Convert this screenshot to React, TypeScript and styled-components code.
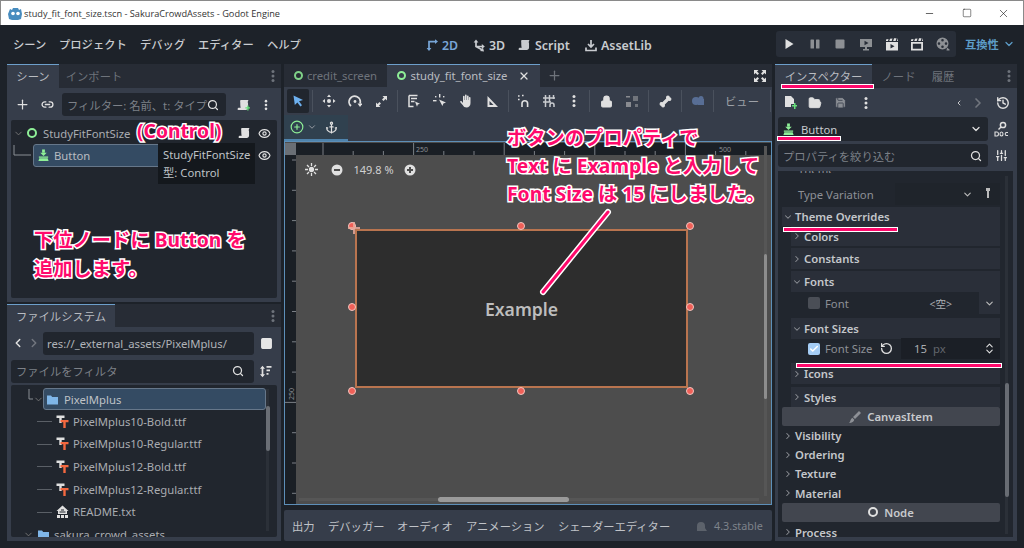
import React from "react";
import styled, { createGlobalStyle } from "styled-components";
import { Plus, Link2, Search, ChevronDown, ChevronRight, ChevronLeft, Eye, X, Minus, Square, Anchor, Lock, Bone, Check, FolderOpen, Save, History, SlidersVertical, RotateCcw, ChevronsUpDown, CirclePlus } from "lucide-react";

const FONT = `"Noto Sans", "Noto Sans CJK JP", sans-serif`;

const Global = createGlobalStyle`
  html, body { margin: 0; padding: 0; background: #1c2028; }
  body { font-family: ${FONT}; width: 1024px; height: 548px; overflow: hidden; }
  * { box-sizing: border-box; }
`;

const Page = styled.div`
  position: relative; width: 1024px; height: 548px; background: #1d2229; overflow: hidden;
  color: #c6c9cd; font-size: 11.3px;
`;

const TitleBar = styled.div`
  height: 25px; background: #fff; border-top: 1px solid #8a8a8a; border-left: 1px solid #8a8a8a; border-right: 1px solid #8a8a8a;
  display: flex; align-items: center; padding: 0 0 0 7px; color: #333; font-size: 9.2px; font-family: "Open Sans", "Noto Sans", sans-serif;
`;
const TitleText = styled.span`margin-left: 1px; flex: 1; white-space: nowrap;`;
const WinBtn = styled.div`width: 37px; display: flex; justify-content: center; color: #111; &:last-child{margin-right: 1px;}`;

const MenuBar = styled.div`height: 39px; display: flex; align-items: center; position: relative; padding: 0 0 2px 13px;`;
const MenuItem = styled.span<{ $w: number }>`width: ${p => p.$w}px; font-size: 11.3px; color: #c9ccd0; white-space: nowrap; font-weight: 500;`;
const MainTabs = styled.div`position: absolute; left: 426px; top: 10px; display: flex; align-items: center; height: 20px;`;
const MainTab = styled.span<{ $active?: boolean; $w: number }>`
  width: ${p => p.$w}px; display: inline-flex; align-items: center; gap: 4px; font-size: 12.4px; font-weight: 600; flex: none;
  color: ${p => (p.$active ? "#78a6d8" : "#c9ccd0")};
`;
const PlayGroup = styled.div`
  position: absolute; left: 776px; top: 6px; width: 180px; height: 26px; background: #282e38; border-radius: 3px;
  display: flex; align-items: center;
`;
const PlayCell = styled.div<{ $dim?: boolean }>`width: 25.8px; display: flex; justify-content: center; opacity: ${p => (p.$dim ? 0.55 : 1)}; color: #e0e0e0;`;
const Compat = styled.div`position: absolute; left: 965px; top: 11px; display: flex; align-items: center; gap: 4px; color: #5d9dc8; font-size: 11.3px; font-weight: 600;`;

const Docks = styled.div`display: flex; height: 477px; padding-left: 7px; gap: 3px;`;
const Column = styled.div<{ $w: number }>`width: ${p => p.$w}px; display: flex; flex-direction: column;`;

const TabStrip = styled.div<{ $h?: number; $gapTop?: boolean }>`
  height: ${p => p.$h ?? 24}px; display: flex; align-items: stretch; background: #272c35; flex: none;
  border-top: ${p => (p.$gapTop ? "2px solid #1d2229" : "none")};
`;
const DockTab = styled.div<{ $active?: boolean; $w: number }>`
  width: ${p => p.$w}px; display: flex; align-items: center; justify-content: center; flex: none; white-space: nowrap; gap: 4px; padding-bottom: 1px;
  background: ${p => (p.$active ? "#363d4a" : "transparent")};
  border-top: ${p => (p.$active ? "1px solid #6d9fcb" : "1px solid transparent")};
  color: ${p => (p.$active ? "#b9bcc1" : "#6e737b")};
`;
const StripSpacer = styled.div`flex: 1;`;
const StripDots = styled.div`width: 16px; display: flex; align-items: center; justify-content: center; color: #6e737b;`;

const Panel = styled.div<{ $h: number; $pl?: number; $pt?: number }>`
  height: ${p => p.$h}px; background: #363d4a; padding: ${p => p.$pt ?? 0}px 4px 4px ${p => p.$pl ?? 4}px; display: flex; flex-direction: column; flex: none;
`;
const ToolRow = styled.div<{ $h: number; $mt?: number }>`height: ${p => p.$h}px; margin-top: ${p => p.$mt ?? 0}px; display: flex; align-items: center; flex: none;`;
const IconCell = styled.div<{ $w: number; $o?: number; $bg?: string; $c?: string }>`
  width: ${p => p.$w}px; display: flex; align-items: center; justify-content: center; flex: none;
  color: ${p => p.$c ?? "#e0e0e0"}; opacity: ${p => p.$o ?? 1};
  background: ${p => p.$bg ?? "transparent"}; align-self: ${p => (p.$bg ? "stretch" : "auto")};
`;
const Field = styled.div<{ $w: number; $muted?: boolean; $h?: number; $pl?: number; $pr?: number }>`
  width: ${p => p.$w}px; height: ${p => p.$h ?? 23}px; background: #21262e; border-radius: 3px; display: flex; align-items: center; padding: 0 ${p => p.$pr ?? 6}px 0 ${p => p.$pl ?? 5}px; flex: none;
  white-space: nowrap; color: ${p => (p.$muted ? "#7d8188" : "#b0b3b8")}; justify-content: space-between; overflow: hidden;
`;
const Tree = styled.div<{ $mt?: number }>`flex: 1; margin-top: ${p => p.$mt ?? 0}px; background: #21262e; border-radius: 2px; overflow: hidden; position: relative; min-height: 0;`;

const SceneTop = styled.div`padding: 2px 0 0 2px; display: flex; flex-direction: column;`;
const SceneLine = styled.div`height: 22px; display: flex; align-items: center; white-space: nowrap; color: #a9acb1;`;
const SceneSel = styled.div`
  width: 222px; height: 23px; flex: none; display: flex; align-items: center; gap: 4px; padding-left: 3px; margin-left: 2px;
  border-radius: 3px; background: #344b63; border: 1px solid #66778a; color: #b9bcc1;
`;
const NameGap = styled.span<{ $ml: number }>`margin-left: ${p => p.$ml}px;`;
const RowEnd = styled.div`margin-left: auto; display: flex; align-items: center; gap: 7px; padding-right: 6px; color: #e0e0e0;`;
const Ring = styled.span<{ $size: number; $color: string; $b?: number }>`
  width: ${p => p.$size}px; height: ${p => p.$size}px; border: ${p => p.$b ?? 2}px solid ${p => p.$color}; border-radius: 50%; display: inline-block; flex: none;
`;
const Tooltip = styled.div`
  position: absolute; left: 158px; top: 143px; width: 97px; height: 41px; background: #14181d; color: #bfc2c6; font-size: 11.3px; line-height: 17.5px;
  padding: 3px 0 0 5px; white-space: nowrap; z-index: 4;
`;

const FileList = styled.div`display: flex; flex-direction: column; padding-top: 3px;`;
const FileRow = styled.div<{ $ml: number }>`
  height: 22.6px; flex: none; display: flex; align-items: center; gap: 4px; margin-left: ${p => p.$ml}px; color: #a9acb1; white-space: nowrap;
`;
const FolderHead = styled.div`height: 22px; flex: none; display: flex; align-items: center; margin-left: 17px; white-space: nowrap;`;
const FolderSel = styled.div`
  width: 223px; height: 22px; flex: none; display: flex; align-items: center; gap: 5px; padding-left: 2px; margin-left: -1px;
  border-radius: 3px; background: #344b63; border: 1px solid #66778a; color: #bfc2c6;
`;
const SakuraRow = styled(FileRow)`gap: 3px;`;
const TreeBar = styled.div`position: absolute; right: 8px; top: 4px; bottom: 6px; width: 3px; background: #2b3038;`;
const TreeThumb = styled.div`position: absolute; left: 0; top: 17px; width: 4px; height: 45px; background: #6a6e75; border-radius: 2px;`;

const Toolbar = styled.div`height: 28px; background: #363d4a; display: flex; align-items: center; padding-left: 3px; flex: none;`;
const ToolBtn = styled.div<{ $w?: number; $active?: boolean; $o?: number; $c?: string }>`
  width: ${p => p.$w ?? 26}px; height: 24px; display: flex; align-items: center; justify-content: center; flex: none; color: ${p => p.$c ?? "#e0e0e0"};
  background: ${p => (p.$active ? "#21262e" : "transparent")}; border-radius: 2px; opacity: ${p => p.$o ?? 1};
`;
const ToolSep = styled.div`width: 1px; height: 22px; background: #4a515d; margin: 0 3px; flex: none;`;
const SubRow = styled.div`height: 26px; background: #363d4a; flex: none;`;
const SubBox = styled.div`width: 64px; height: 26px; background: #30414f; border-bottom: 2px solid #4f84ad; display: flex; align-items: center; padding-left: 6px; gap: 3px; color: #e0e0e0;`;
const AnchorSlot = styled.span`margin-left: 5px; display: flex;`;
const Viewport = styled.div`height: 364px; border: 1px solid #5d8fb8; position: relative; background: #4d4d4d; overflow: hidden; flex: none;`;
const Rulers = styled.svg`display: block; position: absolute; left: 0; top: 0;`;
const Overlay = styled.div`position: absolute; left: 20px; top: 20px; display: flex; align-items: center; color: #e0e0e0;`;
const OverlayGap = styled.span`width: 13px;`;
const ZoomLabel = styled.span`width: 61px; text-align: center; color: #d0d0d0; font-size: 11px;`;
const ControlRect = styled.div`
  position: absolute; left: 70px; top: 87px; width: 333px; height: 159px; background: #2d2d2d; border: 2px solid #b9744f;
  display: flex; align-items: center; justify-content: center; color: #bdbdbd; font-weight: 600; font-size: 17.6px;
`;
const Handle = styled.i<{ $x: number; $y: number }>`
  position: absolute; left: ${p => p.$x - 4}px; top: ${p => p.$y - 4}px; width: 8px; height: 8px; border-radius: 50%; background: #f06058; border: 1px solid #f2c6c0;
`;
const Pivot = styled.svg`position: absolute; left: 63px; top: 80px;`;
const VBar = styled.div`position: absolute; right: 4px; top: 4px; bottom: 8px; width: 3px; background: #565656;`;
const VThumb = styled.div`position: absolute; top: 108px; left: 0; width: 3px; height: 145px; background: #8d8d8d; border-radius: 2px;`;
const HBar = styled.div`position: absolute; left: 14px; right: 12px; bottom: 3px; height: 3px; background: #565656;`;
const HThumb = styled.div`position: absolute; left: 139px; top: -1px; width: 131px; height: 5px; background: #9a9a9a; border-radius: 3px;`;
const BottomPanel = styled.div`height: 31px; margin-top: 5px; background: #363d4a; display: flex; align-items: center; padding-left: 8px; border-radius: 2px; flex: none; color: #c0c3c8;`;
const BottomItem = styled.span<{ $w: number }>`width: ${p => p.$w}px; white-space: nowrap; flex: none;`;
const Version = styled.div`display: flex; align-items: center; gap: 7px; color: #7e838b; font-size: 10.8px; white-space: nowrap;`;

const InspectorList = styled.div`flex: 1; background: #21262e; margin-top: 4px; overflow: hidden; position: relative; padding: 0 0 0 4px; min-height: 0;`;
const Clip = styled.div`display: flex; flex-direction: column; width: 218px;`;
const Row = styled.div<{ $h: number; $indent?: number; $group?: boolean; $bold?: boolean; $mt?: number; $pl?: number }>`
  height: ${p => p.$h}px; flex: none; display: flex; align-items: center; white-space: nowrap;
  margin-left: ${p => p.$indent ?? 0}px; margin-top: ${p => p.$mt ?? 0}px; padding-left: ${p => p.$pl ?? 1}px;
  background: ${p => (p.$group ? "#2a2f39" : "transparent")};
  font-weight: ${p => (p.$bold ? 600 : 400)}; color: ${p => (p.$bold ? "#c4c7cb" : "#8d9096")};
  gap: 2px;
`;
const ClippedRow = styled.div`height: 2px; overflow: hidden; display: flex; align-items: flex-end; padding-left: 16px; line-height: 6px; color: #8d9096; flex: none;`;
const Category = styled.div`height: 19px; flex: none; background: #42464f; border-radius: 2px; display: flex; align-items: center; justify-content: center; gap: 6px; color: #c8cacd; font-weight: 600;`;
const CheckBox = styled.span<{ $on?: boolean }>`
  width: 12px; height: 12px; border-radius: 2px; background: ${p => (p.$on ? "#a5cdf5" : "#4a4e56")}; display: inline-flex; align-items: center; justify-content: center; margin-right: 3px; color: #fff; flex: none;
`;
const ValueBox = styled.div<{ $w: number; $h?: number; $bg?: string; $end?: boolean }>`
  margin-left: auto; width: ${p => p.$w}px; height: ${p => p.$h ?? 21}px; background: ${p => p.$bg ?? "#1b1f26"}; display: flex; align-items: center; color: #8d9096; flex: none;
  justify-content: ${p => (p.$end ? "flex-end" : "flex-start")};
`;
const ResetSlot = styled.span`margin-left: 5px; display: flex; color: #e0e0e0;`;
const VariationTail = styled.div`display: flex; align-items: center; gap: 12px; padding-right: 9px;`;
const EmptyLabel = styled.span`margin-right: 27px; color: #a9acb1; font-size: 10.5px;`;
const Number15 = styled.span`margin-left: 13px; color: #a9acb1;`;
const PxUnit = styled.span`margin-left: 6px; color: #62666d;`;
const Spinner = styled.span`margin-left: auto; margin-right: 4px; display: flex; color: #e0e0e0;`;
const InspBar = styled.div`position: absolute; left: 227px; top: 5px; bottom: 3px; width: 3px; background: #2b3038;`;
const InspThumb = styled.div`position: absolute; left: 0; top: 207px; width: 4px; height: 114px; background: #686c73; border-radius: 2px;`;
const SelectName = styled.span`margin-left: 6px; color: #c6c9cd; margin-right: auto;`;

const Note = styled.div<{ $x: number; $y: number }>`
  position: absolute; left: ${p => p.$x}px; top: ${p => p.$y}px; z-index: 6; white-space: nowrap;
  font-family: "Noto Sans", "Noto Sans CJK JP", sans-serif;
  font-weight: 700; font-size: 19.3px; line-height: 26px; color: #ff0a6c;
  -webkit-text-stroke: 3px #fff; paint-order: stroke fill;
`;
const Mark = styled.div<{ $x: number; $y: number; $w: number }>`
  position: absolute; left: ${p => p.$x}px; top: ${p => p.$y}px; width: ${p => p.$w}px; height: 5px; background: #ff0a6c; border: 1px solid #fff; z-index: 6;
`;
const Callout = styled.svg`position: absolute; left: 530px; top: 200px; z-index: 6;`;

const NodeIcon = ({ s = 14 }: { s?: number }) => (
  <svg width={s} height={s} viewBox="0 0 14 14" fill="#8eef97" style={{ flex: "none" }}>
    <rect x="5.5" y="0.5" width="3" height="3.5" />
    <path d="M3.5 4h7L7 7.5z" />
    <rect x="2" y="8" width="10" height="1.5" opacity=".9" />
    <path d="M2.5 10h9l1 3h-11z" />
  </svg>
);
const FontIcon = () => (
  <svg width="13" height="13" viewBox="0 0 13 13" style={{ flex: "none" }}>
    <path d="M0.5 0.5h8v2.4h-2.8v5.2H3.3V2.9H0.5z" fill="#e0e0e0" />
    <path d="M4.5 5h8v2.2h-2.8V13H7.3V7.2H4.5z" fill="#f4683f" />
  </svg>
);
const TxtIcon = () => (
  <svg width="13" height="13" viewBox="0 0 13 13" fill="#e0e0e0" style={{ flex: "none" }}>
    <path d="M6.5 0.5L12.5 6H11v3H2V6H.5z" />
    <rect x="5" y="4.5" width="3" height="1" fill="#21262e" /><rect x="3.5" y="6.5" width="6" height="1" fill="#21262e" />
    <rect x="1" y="10" width="3" height="3" /><rect x="5" y="10" width="3" height="3" /><rect x="9" y="10" width="3" height="3" />
  </svg>
);
const ScriptIcon = ({ add, c = "#e0e0e0" }: { add?: boolean; c?: string }) => (
  <svg width="13" height="14" viewBox="0 0 14 14" style={{ flex: "none" }}>
    <path d="M4 1.5h8.5c-1 1-1 2.5-.6 4v4.5c0 1-1 2.5-2.5 2.5H1.5c-1 0-1.4-1.8 0-2.5H4c-.5-2-.5-4-.5-5.5S3 2.2 4 1.5z" fill={c} />
    {add && <path d="M9 9.5h2v-2h1.4v2h1.6v1.4h-1.6v2H11v-2H9z" fill="#66e07a" />}
  </svg>
);
const Dots = () => (
  <svg width="14" height="14" viewBox="0 0 14 14" fill="currentColor">
    <circle cx="7" cy="2.5" r="1.5" /><circle cx="7" cy="7" r="1.5" /><circle cx="7" cy="11.5" r="1.5" />
  </svg>
);
const FolderFill = () => (
  <svg width="13" height="13" viewBox="0 0 13 13" fill="#7fb6e8" style={{ flex: "none" }}>
    <path d="M1 2.5h4l1.2 1.5H12v7.5H1z" />
  </svg>
);
const SortIcon = () => (
  <svg width="13" height="13" viewBox="0 0 13 13" fill="none" stroke="#e0e0e0" strokeWidth="1.7">
    <path d="M3.500 2v9" /><path d="M1 3.700L3.500.8 6 3.700zM1 9.300l2.500 2.900L6 9.300z" fill="#e0e0e0" stroke="none" />
    <path d="M7.500 1.800H12.500M7.500 5.300H11M7.500 8.800H9.500" />
  </svg>
);
const GuideL = ({ w, h = 20 }: { w: number; h?: number }) => (
  <svg width={w} height={h} style={{ flex: "none" }}><path d={`M1 0V${h / 2}H${w}`} stroke="#8a8e94" fill="none" /></svg>
);
const GuideT = () => (
  <svg width="15" height="22" style={{ flex: "none" }}><path d="M0 11.5H15" stroke="#5a5f66" fill="none" /></svg>
);
const MoveIcon = () => (
  <svg width="14" height="14" viewBox="0 0 14 14" fill="#e0e0e0">
    <circle cx="7" cy="7" r="2" /><path d="M7 .5l2 2.5H5zM7 13.5L5 11h4zM.5 7L3 5v4zM13.5 7L11 9V5z" />
  </svg>
);
const RotateIcon = () => (
  <svg width="14" height="14" viewBox="0 0 14 14" fill="none" stroke="#e0e0e0" strokeWidth="1.8">
    <path d="M3 12A5.6 5.6 0 1 1 12 9.5" /><circle cx="7" cy="7.5" r="1.4" fill="#e0e0e0" stroke="none" /><path d="M9.5 9.5h5L12 13z" fill="#e0e0e0" stroke="none" />
  </svg>
);
const ScaleIcon = () => (
  <svg width="13" height="13" viewBox="0 0 13 13" fill="#e0e0e0">
    <path d="M7.5 1H12v4.5L10.5 4 8.5 6 7 4.5 9 2.5zM5.5 12H1V7.5L2.5 9l2-2L6 8.5l-2 2z" />
  </svg>
);
const ListSelectIcon = () => (
  <svg width="14" height="14" viewBox="0 0 14 14" fill="none" stroke="#e0e0e0" strokeWidth="1.5">
    <path d="M2 1.5h8.5M2 1.5v11h4.5M4 4.5h6M4 7.5h3.5" /><path d="M8 7.5l5 2.2-2.2.7-.8 2.3z" fill="#e0e0e0" stroke="none" />
  </svg>
);
const PivotIcon = () => (
  <svg width="14" height="14" viewBox="0 0 14 14" fill="#e0e0e0">
    <rect x="0" y="6" width="3.5" height="1.4" /><rect x="6" y="0" width="1.4" height="3.5" /><rect x="2" y="2" width="1.4" height="1.4" /><rect x="10" y="2" width="1.4" height="1.4" />
    <path d="M6 5.5l7 3-2.6.9-1 2.6z" />
  </svg>
);
const HandIcon = () => (
  <svg width="14" height="14" viewBox="0 0 14 14" fill="#e0e0e0">
    <path d="M4 6V2.5a.8.8 0 011.6 0V6h.4V1.3a.8.8 0 011.6 0V6h.4V2.2a.8.8 0 011.6 0V6h.3V3.8a.8.8 0 011.6 0V9c0 2.8-1.6 4.5-4 4.5-1.8 0-2.8-.8-3.6-2.2L1.3 8.2c-.5-.9.7-1.6 1.3-.9L4 9z" />
  </svg>
);
const RulerIcon = () => (
  <svg width="13" height="13" viewBox="0 0 13 13" fill="#e0e0e0" fillRule="evenodd"><path d="M1.5 1v11h10.5zM3.5 6v4h4z" /></svg>
);
const SmartSnap = () => (
  <svg width="14" height="14" viewBox="0 0 14 14" fill="none" stroke="#e0e0e0" strokeWidth="1.6">
    <path d="M5 13V9.5a2.8 2.8 0 015.6 0V13" /><path d="M1 2h1.6M5 1.5h1.6M1 5.5h1.6" />
  </svg>
);
const GridSnap = () => (
  <svg width="14" height="14" viewBox="0 0 14 14" fill="none" stroke="#c9ccd0" strokeWidth="1.5">
    <path d="M3.5 1v12M7.5 1v7M11.5 1v4M1 4h12M1 8h8" /><path d="M8 13v-2a2 2 0 014 0v2" />
  </svg>
);
const GroupIcon = () => (
  <svg width="13" height="13" viewBox="0 0 13 13" fill="#c0c0c0">
    <rect x="0" y="7" width="5" height="5" /><rect x="7" y="1" width="5" height="5" opacity=".7" /><rect x="0" y="1" width="4" height="1.5" /><rect x="9" y="9" width="3" height="3" opacity=".7" />
  </svg>
);
const CameraIcon = () => (
  <svg width="14" height="12" viewBox="0 0 14 12" fill="#7aa0e0">
    <circle cx="5" cy="6" r="4" /><circle cx="10" cy="3.5" r="2.5" /><rect x="7" y="4" width="6" height="6" />
  </svg>
);
const Icon2D = () => (
  <svg width="12" height="13" viewBox="0 0 12 13" fill="none" stroke="#78a6d8" strokeWidth="1.7">
    <path d="M3 11V2.6h6.5" /><path d="M.6 9l2.4 3 2.4-3" fill="#78a6d8" stroke="none" /><path d="M9 .3l3 2.3-3 2.3z" fill="#78a6d8" stroke="none" />
  </svg>
);
const Icon3D = () => (
  <svg width="12" height="13" viewBox="0 0 12 13" fill="none" stroke="#c9ccd0" strokeWidth="1.7">
    <path d="M3 3v4.5l6 3.2M3 7.5h6.5" /><path d="M.6 3.4L3 .5l2.4 2.9z" fill="#c9ccd0" stroke="none" /><path d="M7 12l4 .5-1-3.8z" fill="#c9ccd0" stroke="none" /><path d="M8.8 5l3 2.5-3 2.5z" fill="#c9ccd0" stroke="none" />
  </svg>
);
const AssetIcon = () => (
  <svg width="12" height="13" viewBox="0 0 12 13" fill="none" stroke="#c9ccd0" strokeWidth="1.7">
    <path d="M6 1v6.5M3 5l3 3 3-3M1 8.5v3h10v-3" />
  </svg>
);
const ExpandIcon = () => (
  <svg width="12" height="12" viewBox="0 0 12 12" fill="#e0e0e0">
    <path d="M0 0h4.5L3 1.5 5 3.5 3.5 5 1.5 3 0 4.5zM12 0v4.5L10.5 3 8.500 5 7 3.500 9 1.500 7.500 0zM0 12V7.500L1.500 9 3.500 7 5 8.500 3 10.500 4.500 12zM12 12H7.500L9 10.500 7 8.500 8.500 7 10.500 9 12 7.500z" />
  </svg>
);
const GameMonitor = () => (
  <svg width="14" height="13" viewBox="0 0 14 13" fill="#e0e0e0">
    <path d="M1 1h12v8H8v2h2v1.500H4V11h2V9H1z" /><path d="M5.500 2.800v4.400L9.500 5z" fill="#282e38" />
  </svg>
);
const ClapFilled = () => (
  <svg width="14" height="13" viewBox="0 0 14 13" fill="#e0e0e0">
    <path d="M1 1.500l2.500-.5-.5 2H1zM5 .8l2.500-.3-.8 2.500H4.300zM9 .3h2.500l-.8 2.700H8.200zM13 0v3h-1z" />
    <path d="M1 4h12v8.500H1z" /><path d="M5.500 6v4.500L9.500 8.200z" fill="#282e38" />
  </svg>
);
const ClapOutline = () => (
  <svg width="14" height="13" viewBox="0 0 14 13" fill="#e0e0e0">
    <path d="M1 1.500l2.500-.5-.5 2H1zM5 .8l2.500-.3-.8 2.500H4.300zM9 .3h2.500l-.8 2.700H8.200zM13 0v3h-1z" />
    <path fillRule="evenodd" d="M1 4h12v8.500H1zM2.800 5.800v5h8.400v-5z" />
  </svg>
);
const Reel = () => (
  <svg width="14" height="14" viewBox="0 0 14 14" fill="#e0e0e0" fillRule="evenodd">
    <path d="M6.500.5a6 6 0 100 12 6 6 0 000-12zM6.500 2a1.300 1.300 0 110 2.600 1.300 1.300 0 010-2.600zM3 5.300a1.300 1.300 0 110 2.600 1.300 1.300 0 010-2.600zM10 5.300a1.300 1.300 0 110 2.600 1.300 1.300 0 010-2.600zM6.500 8.500a1.300 1.300 0 110 2.600 1.300 1.300 0 010-2.600z" />
    <path d="M11 10.500l2.500 2v1h-3z" />
  </svg>
);
const NewDoc = () => (
  <svg width="13" height="14" viewBox="0 0 13 14" fill="#e0e0e0">
    <path d="M1 0h6l3 3v5H7v3H1z" /><path d="M8 9h2V7h1.500v2H13v1.500h-1.500V13H10v-2.500H8z" fill="#66e07a" />
  </svg>
);
const DocSearch = () => (
  <svg width="15" height="16" viewBox="0 0 15 16" fill="none" stroke="#e0e0e0" strokeWidth="1.500">
    <circle cx="9" cy="4" r="2.600" /><path d="M7 6L4.500 8.500" />
    <path d="M1 11h2q1.500 0 1.500 2T3 15H1zM7.500 11a1.500 2 0 100 4 1.500 2 0 000-4zM14 11.500h-1.500q-1.300 0-1.300 1.500t1.300 1.500H14" strokeWidth="1.100" />
  </svg>
);
const BrushIcon = () => (
  <svg width="12" height="12" viewBox="0 0 12 12" fill="#8d9096"><path d="M10 0l2 2-6 6-2-2zM3.300 6.700l2 2C5 10.500 3 12 0 12c1.500-1 1-3.500 3.300-5.300z" /></svg>
);
const PinIcon = () => (
  <svg width="6" height="12" viewBox="0 0 6 12" fill="#bbb"><rect x="1" y="0" width="4" height="3" /><rect x="2" y="3" width="2" height="7" /></svg>
);
const Bell = () => (
  <svg width="12" height="12" viewBox="0 0 12 12" fill="#5c626b"><path d="M2 11V6a4 4 0 018 0v2l2 3z" /></svg>
);
const ZoomOut = () => (
  <svg width="12" height="12" viewBox="0 0 12 12"><circle cx="6" cy="6" r="5.500" fill="#e0e0e0" /><rect x="3" y="5" width="6" height="2" fill="#4d4d4d" /></svg>
);
const ZoomIn = () => (
  <svg width="12" height="12" viewBox="0 0 12 12"><circle cx="6" cy="6" r="5.500" fill="#e0e0e0" /><path d="M3 5h2V3h2v2h2v2H7v2H5V7H3z" fill="#4d4d4d" /></svg>
);
const PanIcon = () => (
  <svg width="13" height="13" viewBox="0 0 13 13" fill="none" stroke="#e0e0e0" strokeWidth="1.300"><circle cx="6.500" cy="6.500" r="2" fill="#e0e0e0" /><path d="M6.500 0v3M6.500 10v3M0 6.500h3M10 6.500h3M2 2l2 2M11 2L9 4M2 11l2-2M11 11L9 9" /></svg>
);
const GodotLogo = () => (
  <svg width="15" height="15" viewBox="0 0 15 15" style={{ flex: "none" }}>
    <path d="M2 3l2 1 1-2h5l1 2 2-1 1 5-1 5-3 1H4l-3-1-1-5z" fill="#478cbf" /><circle cx="5" cy="7.500" r="1.800" fill="#fff" /><circle cx="10" cy="7.500" r="1.800" fill="#fff" />
  </svg>
);
const Play = () => <svg width="12" height="12" viewBox="0 0 12 12" fill="#e0e0e0"><path d="M2.500 1l8 5-8 5z" /></svg>;
const Pause = () => <svg width="12" height="12" viewBox="0 0 12 12" fill="#e0e0e0"><rect x="1.500" y="1.500" width="3.500" height="9" rx=".6" /><rect x="7" y="1.500" width="3.500" height="9" rx=".6" /></svg>;
const Stop = () => <svg width="12" height="12" viewBox="0 0 12 12" fill="#e0e0e0"><rect x="1.500" y="1.500" width="9" height="9" rx="1" /></svg>;

const topTicks = Array.from({ length: 16 }, (_, i) => 38 + i * 30.2);
const leftTicks = Array.from({ length: 12 }, (_, i) => 18 + i * 30.3);

const Caret = ({ open }: { open?: boolean }) =>
  open ? <ChevronDown size={10} strokeWidth={2.5} color="#8d9096" /> : <ChevronRight size={10} strokeWidth={2.5} color="#8d9096" />;

export default function App() {
  return (
    <Page>
      <Global />
      <TitleBar>
        <GodotLogo />
        <TitleText>study_fit_font_size.tscn - SakuraCrowdAssets - Godot Engine</TitleText>
        <WinBtn><Minus size={11} strokeWidth={1.4} /></WinBtn>
        <WinBtn><Square size={10} strokeWidth={1.2} /></WinBtn>
        <WinBtn><X size={13} strokeWidth={1.1} /></WinBtn>
      </TitleBar>
      <MenuBar>
        <MenuItem $w={46}>シーン</MenuItem>
        <MenuItem $w={81}>プロジェクト</MenuItem>
        <MenuItem $w={58}>デバッグ</MenuItem>
        <MenuItem $w={69}>エディター</MenuItem>
        <MenuItem $w={40}>ヘルプ</MenuItem>
        <MainTabs>
          <MainTab $active $w={47}><Icon2D />2D</MainTab>
          <MainTab $w={45}><Icon3D />3D</MainTab>
          <MainTab $w={67}><ScriptIcon c="#c9ccd0" />Script</MainTab>
          <MainTab $w={70}><AssetIcon />AssetLib</MainTab>
        </MainTabs>
        <PlayGroup>
          <PlayCell><Play /></PlayCell>
          <PlayCell $dim><Pause /></PlayCell>
          <PlayCell $dim><Stop /></PlayCell>
          <PlayCell $dim><GameMonitor /></PlayCell>
          <PlayCell><ClapFilled /></PlayCell>
          <PlayCell><ClapOutline /></PlayCell>
          <PlayCell $dim><Reel /></PlayCell>
        </PlayGroup>
        <Compat>互換性<ChevronDown size={12} strokeWidth={2.5} /></Compat>
      </MenuBar>

      <Docks>
        <Column $w={274}>
          <TabStrip>
            <DockTab $active $w={52}>シーン</DockTab>
            <DockTab $w={70}>インポート</DockTab>
            <StripSpacer />
            <StripDots><Dots /></StripDots>
          </TabStrip>
          <Panel $h={214} $pt={1}>
            <ToolRow $h={31}>
              <IconCell $w={22}><Plus size={15} strokeWidth={2} /></IconCell>
              <IconCell $w={29}><Link2 size={13} strokeWidth={2.4} /></IconCell>
              <Field $w={164} $muted $pr={7}><span>フィルター: 名前、t: タイプ</span><Search size={12} color="#e0e0e0" strokeWidth={2.5} /></Field>
              <IconCell $w={34}><ScriptIcon add /></IconCell>
              <IconCell $w={12}><Dots /></IconCell>
            </ToolRow>
            <Tree>
              <SceneTop>
                <SceneLine>
                  <ChevronDown size={11} color="#777" />
                  <NameGap $ml={3} />
                  <Ring $size={10} $color="#8eef97" />
                  <NameGap $ml={6}>StudyFitFontSize</NameGap>
                  <RowEnd><ScriptIcon /><Eye size={13} strokeWidth={2.2} /></RowEnd>
                </SceneLine>
                <SceneLine>
                  <GuideL w={18} />
                  <SceneSel>
                    <NodeIcon s={13} />
                    <span>Button</span>
                  </SceneSel>
                  <RowEnd><Eye size={13} strokeWidth={2.2} /></RowEnd>
                </SceneLine>
              </SceneTop>
            </Tree>
          </Panel>
          <TabStrip $h={25} $gapTop>
            <DockTab $active $w={108}>ファイルシステム</DockTab>
            <StripSpacer />
            <StripDots><Dots /></StripDots>
          </TabStrip>
          <Panel $h={214}>
            <ToolRow $h={32}>
              <IconCell $w={14}><ChevronLeft size={14} strokeWidth={2.5} /></IconCell>
              <IconCell $w={18} $o={0.35}><ChevronRight size={14} strokeWidth={2.5} /></IconCell>
              <Field $w={211} $pl={4}>res://_external_assets/PixelMplus/</Field>
              <IconCell $w={24}><Square size={13} fill="#e6e6e6" color="#e6e6e6" /></IconCell>
            </ToolRow>
            <ToolRow $h={24}>
              <Field $w={243} $muted $pr={10}>ファイルをフィルタ<Search size={12} color="#e0e0e0" strokeWidth={2.5} /></Field>
              <IconCell $w={23}><SortIcon /></IconCell>
            </ToolRow>
            <Tree $mt={2}>
              <FileList>
                <FolderHead>
                  <GuideL w={5} h={20} />
                  <ChevronDown size={11} color="#777" />
                  <FolderSel><FolderFill /><span>PixelMplus</span></FolderSel>
                </FolderHead>
                {["PixelMplus10-Bold.ttf", "PixelMplus10-Regular.ttf", "PixelMplus12-Bold.ttf", "PixelMplus12-Regular.ttf"].map(n => (
                  <FileRow key={n} $ml={26}><GuideT /><FontIcon /><span>{n}</span></FileRow>
                ))}
                <FileRow $ml={26}><GuideT /><TxtIcon /><span>README.txt</span></FileRow>
                <SakuraRow $ml={12}><ChevronDown size={11} color="#777" /><FolderFill /><NameGap $ml={1}>sakura_crowd_assets</NameGap></SakuraRow>
              </FileList>
              <TreeBar><TreeThumb /></TreeBar>
            </Tree>
          </Panel>
        </Column>

        <Column $w={488}>
          <TabStrip $h={23}>
            <DockTab $w={103}><Ring $size={9} $color="#7fd188" /> credit_screen</DockTab>
            <DockTab $active $w={153}><Ring $size={9} $color="#8eef97" /><NameGap $ml={1}>study_fit_font_size</NameGap><NameGap $ml={3} /><X size={12} strokeWidth={2.5} color="#e0e0e0" /></DockTab>
            <IconCell $w={28} $c="#6e737b"><Plus size={15} /></IconCell>
            <StripSpacer />
            <IconCell $w={24}><ExpandIcon /></IconCell>
          </TabStrip>
          <Toolbar>
            <ToolBtn $active $w={22}><svg width="14" height="14" viewBox="0 0 14 14"><path d="M2.500 1.500l9.500 4.500-4 1.200 3 4-1.600 1.300-3-4L3.800 11z" fill="#6db0ef" /></svg></ToolBtn>
            <ToolSep />
            <ToolBtn><MoveIcon /></ToolBtn>
            <ToolBtn><RotateIcon /></ToolBtn>
            <ToolBtn><ScaleIcon /></ToolBtn>
            <ToolSep />
            <ToolBtn><ListSelectIcon /></ToolBtn>
            <ToolBtn><PivotIcon /></ToolBtn>
            <ToolBtn><HandIcon /></ToolBtn>
            <ToolBtn><RulerIcon /></ToolBtn>
            <ToolSep />
            <ToolBtn $w={23}><SmartSnap /></ToolBtn>
            <ToolBtn $w={27}><GridSnap /></ToolBtn>
            <ToolBtn $w={24}><Dots /></ToolBtn>
            <ToolSep />
            <ToolBtn><Lock size={13} fill="#e0e0e0" strokeWidth={2} /></ToolBtn>
            <ToolBtn $o={0.6}><GroupIcon /></ToolBtn>
            <ToolSep />
            <ToolBtn><Bone size={13} fill="#e0e0e0" /></ToolBtn>
            <ToolSep />
            <ToolBtn $w={25} $o={0.5}><CameraIcon /></ToolBtn>
            <ToolSep />
            <ToolBtn $w={50} $c="#9ea2a8">ビュー</ToolBtn>
            <ToolSep />
          </Toolbar>
          <SubRow>
            <SubBox>
              <CirclePlus size={14} color="#8eef97" strokeWidth={2} />
              <ChevronDown size={10} strokeWidth={2.2} color="#9ea2a8" />
              <AnchorSlot><Anchor size={13} strokeWidth={2.2} /></AnchorSlot>
            </SubBox>
          </SubRow>
          <Viewport>
            <Rulers width="488" height="364">
              <rect x="0" y="1" width="488" height="12" fill="#1a1f25" />
              <rect x="0" y="1" width="11" height="364" fill="#1a1f25" />
              <rect x="0" y="1" width="11" height="12" fill="#6a6f75" />
              {topTicks.map((x, i) => (
                <line key={i} x1={x} x2={x} y1={i % 3 === 0 ? 1 : 9} y2={13} stroke="#7a7f85" />
              ))}
              {leftTicks.map((y, i) => (
                <line key={i} y1={y} y2={y} x1={i === 8 ? 0 : 7} x2={11} stroke="#7a7f85" />
              ))}
              <text x="131" y="9.500" fontSize="7" fill="#8a8e94" fontFamily="Noto Sans">250</text>
              <text x="434" y="9.500" fontSize="7" fill="#8a8e94" fontFamily="Noto Sans">500</text>
              <text x="9" y="258" fontSize="7" fill="#8a8e94" fontFamily="Noto Sans" transform="rotate(-90 9 258)">250</text>
            </Rulers>
            <Overlay>
              <PanIcon />
              <OverlayGap />
              <ZoomOut />
              <ZoomLabel>149.8 %</ZoomLabel>
              <ZoomIn />
            </Overlay>
            <ControlRect>Example</ControlRect>
            <Handle $x={67} $y={84} /><Handle $x={236} $y={84} /><Handle $x={405} $y={84} />
            <Handle $x={67} $y={165} /><Handle $x={405} $y={165} />
            <Handle $x={67} $y={249} /><Handle $x={236} $y={249} /><Handle $x={405} $y={249} />
            <Pivot width="12" height="12" viewBox="0 0 12 12"><path d="M5 0h2v5h5v2H7v5H5V7H0V5h5z" fill="#e9a99a" opacity=".85" /></Pivot>
            <VBar><VThumb /></VBar>
            <HBar><HThumb /></HBar>
          </Viewport>
          <BottomPanel>
            <BottomItem $w={36}>出力</BottomItem>
            <BottomItem $w={69}>デバッガー</BottomItem>
            <BottomItem $w={69}>オーディオ</BottomItem>
            <BottomItem $w={92}>アニメーション</BottomItem>
            <BottomItem $w={137}>シェーダーエディター</BottomItem>
            <Version><Bell />4.3.stable</Version>
          </BottomPanel>
        </Column>

        <Column $w={242}>
          <TabStrip>
            <DockTab $active $w={97}>インスペクター</DockTab>
            <DockTab $w={53}>ノード</DockTab>
            <DockTab $w={36}>履歴</DockTab>
            <StripSpacer />
            <StripDots><Dots /></StripDots>
          </TabStrip>
          <Panel $h={453} $pl={3}>
            <ToolRow $h={29}>
              <IconCell $w={24}><NewDoc /></IconCell>
              <IconCell $w={25}><FolderOpen size={14} fill="#e0e0e0" strokeWidth={1.5} /></IconCell>
              <IconCell $w={26} $o={0.5}><Save size={13} fill="#e0e0e0" color="#363d4a" strokeWidth={1.5} /></IconCell>
              <IconCell $w={26}><Dots /></IconCell>
              <StripSpacer />
              <IconCell $w={8}><ChevronLeft size={16} strokeWidth={2.5} /></IconCell>
              <IconCell $w={30} $o={0.35}><ChevronRight size={16} strokeWidth={2.5} /></IconCell>
              <IconCell $w={20}><History size={14} strokeWidth={2.4} /></IconCell>
            </ToolRow>
            <ToolRow $h={24}>
              <Field $w={210} $h={24} $pl={4}><NodeIcon s={13} /><SelectName>Button</SelectName><ChevronDown size={12} color="#e0e0e0" strokeWidth={2.5} /></Field>
              <IconCell $w={27}><DocSearch /></IconCell>
            </ToolRow>
            <ToolRow $h={23} $mt={3}>
              <Field $w={210} $muted>プロパティを絞り込む<Search size={12} color="#e0e0e0" strokeWidth={2.5} /></Field>
              <IconCell $w={27}><SlidersVertical size={13} strokeWidth={2.4} /></IconCell>
            </ToolRow>
            <InspectorList>
              <Clip>
                <ClippedRow>Theme</ClippedRow>
                <Row $h={8} />
                <Row $h={26} $indent={9} $pl={7}>Type Variation
                  <ValueBox $w={105} $h={22} $bg="#1f242b" $end><VariationTail><ChevronDown size={11} color="#bbb" strokeWidth={2.5} /><PinIcon /></VariationTail></ValueBox>
                </Row>
                <Row $h={19} $group $bold><Caret open />Theme Overrides</Row>
                <Row $h={20} $indent={9} $group $bold><Caret />Colors</Row>
                <Row $h={21} $indent={9} $group $bold $mt={2}><Caret />Constants</Row>
                <Row $h={21} $indent={9} $group $bold $mt={2}><Caret open />Fonts</Row>
                <Row $h={22} $indent={9} $pl={17}><CheckBox />Font
                  <ValueBox $w={112} $h={22} $bg="#21262e" $end><EmptyLabel>&lt;空&gt;</EmptyLabel><IconCell $w={21} $bg="#2a2f39"><ChevronDown size={11} strokeWidth={2.5} color="#bbb" /></IconCell></ValueBox>
                </Row>
                <Row $h={21} $indent={9} $group $bold $mt={4}><Caret open />Font Sizes</Row>
                <Row $h={19} $indent={9} $pl={17}><CheckBox $on><Check size={10} strokeWidth={3.5} /></CheckBox>Font Size
                  <ResetSlot><RotateCcw size={13} strokeWidth={2.4} /></ResetSlot>
                  <ValueBox $w={99} $h={21}><Number15>15</Number15><PxUnit>px</PxUnit><Spinner><ChevronsUpDown size={13} strokeWidth={2} /></Spinner></ValueBox>
                </Row>
                <Row $h={21} $indent={9} $group $bold $mt={5}><Caret />Icons</Row>
                <Row $h={20} $indent={9} $group $bold $mt={3}><Caret />Styles</Row>
                <Category><BrushIcon />CanvasItem</Category>
                {["Visibility", "Ordering", "Texture", "Material"].map(n => (
                  <Row key={n} $h={19.2} $bold><Caret />{n}</Row>
                ))}
                <Category><Ring $size={10} $color="#e0e0e0" />Node</Category>
                <Row $h={19} $bold $mt={1}><Caret />Process</Row>
              </Clip>
              <InspBar><InspThumb /></InspBar>
            </InspectorList>
          </Panel>
        </Column>
      </Docks>

      <Tooltip>StudyFitFontSize<br />型: Control</Tooltip>

      <Note $x={137} $y={118}>(Control)</Note>
      <Note $x={34} $y={227}>下位ノードに Button を</Note>
      <Note $x={34} $y={256}>追加します。</Note>
      <Note $x={507} $y={125}>ボタンのプロパティで</Note>
      <Note $x={507} $y={153}>Text に Example と入力して</Note>
      <Note $x={507} $y={181}>Font Size は 15 にしました。</Note>
      <Callout width="90" height="100">
        <line x1="78" y1="12" x2="13" y2="92" stroke="#fff" strokeWidth="6" strokeLinecap="round" />
        <line x1="78" y1="12" x2="13" y2="92" stroke="#ff0a6c" strokeWidth="3" strokeLinecap="round" />
      </Callout>
      <Mark $x={781} $y={84} $w={93} />
      <Mark $x={777} $y={136} $w={64} />
      <Mark $x={783} $y={227} $w={115} />
      <Mark $x={796} $y={363} $w={206} />
    </Page>
  );
}
